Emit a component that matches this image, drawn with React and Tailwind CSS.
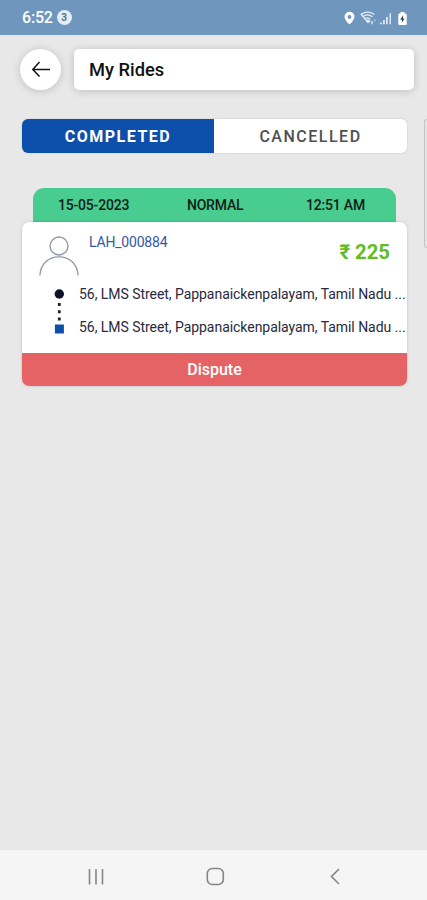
const rides = [
  {
    id: "LAH_000884",
    date: "15-05-2023",
    type: "NORMAL",
    time: "12:51 AM",
    fare: "₹ 225",
    pickup: "56, LMS Street, Pappanaickenpalayam, Tamil Nadu ...",
    drop: "56, LMS Street, Pappanaickenpalayam, Tamil Nadu ...",
  },
];

function StatusBar() {
  return (
    <div className="flex h-[35px] shrink-0 items-center justify-between bg-[#6f96bc] pl-[22px] pr-[20px] text-white">
      <div className="flex items-center gap-[4px]">
        <span className="text-[16px] font-medium leading-5 tracking-[-0.2px]">6:52</span>
        <span className="flex h-[15px] w-[15px] items-center justify-center rounded-full bg-[#e4edf5] text-[10px] font-bold text-[#56708a]">
          3
        </span>
      </div>
      <svg width="64" height="16" viewBox="0 0 64 16" fill="none">
        {/* Location */}
        <path
          fill="#fff"
          fillRule="evenodd"
          d="M6.5 1.8a5 5 0 0 0-5 5c0 3.3 5 7.8 5 7.8s5-4.500 5-7.800a5 5 0 0 0-5-5Zm0 3.300a1.900 1.900 0 1 1 0 3.800 1.900 1.900 0 0 1 0-3.800Z"
        />
        {/* Wifi */}
        <g stroke="#e6eef6" strokeWidth="1.3" strokeLinecap="round">
          <path d="M18.200 4.200c4-2.600 8.800-2.600 12.800 0" />
          <path d="M20 6.600c2.800-2.200 6.200-2.200 9 0" />
          <path d="M22 8.900c1.600-1.300 3.300-1.300 4.800 0" />
          <path d="M18.200 4.200l6.600 8.200" />
          <path d="M29 11.500v2.300" />
          <path d="M31.800 9.500v1.500" strokeWidth="1" opacity=".7" />
        </g>
        <path fill="#e6eef6" d="M24.800 9.200l3 1.800-2.600 2.300-2-2.200Z" />
        {/* Signal */}
        <path fill="#dce8f2" d="M37 12.400h1.800v1.800H37zM40 10h1.800v4.200H40zM43 7h1.800v7.200H43zM46.500 3.200h1.500v11h-1.500z" />
        {/* Battery */}
        <path fill="#fff" d="M57.500 2h4v1.500h1.300q.9 0 .9.900v9.500q0 1-1 1h-6.400q-1 0-1-1V4.400q0-.9.900-.9h1.300z" />
        <path fill="#34495c" d="M60 5.300l-2.800 4.400h1.700v3.100l2.700-4.400h-1.600z" />
      </svg>
    </div>
  );
}

function Header() {
  return (
    <div className="flex gap-[13px] pl-[20px] pr-[13px] pt-[14px]">
      <button className="flex h-[41px] w-[41px] shrink-0 items-center justify-center rounded-full bg-white pb-px shadow-[0_1px_8px_rgba(0,0,0,0.18)]">
        <svg width="20" height="18" viewBox="0 0 20 18" fill="none" stroke="#151515" strokeWidth="1.5">
          <path d="M19 9.500H2M8.500 2L1.800 9.500l6.700 7" />
        </svg>
      </button>
      <div className="flex h-[41px] flex-1 items-center rounded-[5px] bg-white px-[15px] shadow-[0_1px_8px_rgba(0,0,0,0.18)]">
        <h1 className="text-[18.300px] font-medium leading-6 text-[#111]">My Rides</h1>
      </div>
    </div>
  );
}

function Tabs() {
  return (
    <div className="flex h-[34px] w-[385px] overflow-hidden rounded-[6px] bg-white text-[16px] shadow-[0_0_2px_rgba(0,0,0,0.15)]">
      <button className="w-[192px] bg-[#0d50ac] pt-px font-bold tracking-[1.500px] text-white">COMPLETED</button>
      <button className="flex-1 pt-px font-medium tracking-[1.500px] text-[#505050]">CANCELLED</button>
    </div>
  );
}

function UserIcon() {
  return (
    <svg width="40" height="40" viewBox="0 0 40 40" fill="none" stroke="#9499ad" strokeWidth="1.400">
      <circle cx="20" cy="10" r="9" />
      <path d="M.9 39.500C1.500 28 9 20.900 20 20.900S38.500 28 39.100 39.500" />
    </svg>
  );
}

function RideCard({ ride }) {
  return (
    <div className="w-[385px]">
      <div className="mx-[11px] flex h-[34px] items-center justify-between rounded-t-[11px] bg-[#48cc90] pl-[25px] pr-[31px] text-[14px] font-medium tracking-[-0.2px] text-[#101d18]">
        <span>{ride.date}</span>
        <span className="-ml-[5px]">{ride.type}</span>
        <span>{ride.time}</span>
      </div>
      <div className="overflow-hidden rounded-[7px] bg-white shadow-[0_0_3px_rgba(0,0,0,0.18)]">
        <div className="h-[131px]">
          <div className="flex h-[56px] pl-[17px] pr-[17px] pt-[14px]">
            <UserIcon />
            <span className="ml-[10px] mt-[-2px] text-[14px] leading-4 tracking-[-0.2px] text-[#3258a7]">{ride.id}</span>
            <span className="ml-auto mt-[4px] text-[20.300px] font-bold leading-6 text-[#5ebc24]">{ride.fare}</span>
          </div>
          <div className="flex pl-[31px] pt-[8px]">
            <svg width="12" height="48" viewBox="0 0 12 48">
              <circle cx="6.300" cy="8" r="4.700" fill="#0c1029" />
              <path d="M6.300 17v3M6.300 24.200v3M6.300 31.500v3" stroke="#222" strokeWidth="2.800" />
              <path d="M1.900 38.500h9v9h-9z" fill="#0d50ac" />
            </svg>
            <div className="ml-[14px] flex flex-col gap-[16.500px] whitespace-nowrap text-[14px] leading-4 tracking-[-0.045px] text-[#29293d]">
              <span>{ride.pickup}</span>
              <span>{ride.drop}</span>
            </div>
          </div>
        </div>
        <button className="flex h-[33px] w-full items-center justify-center bg-[#e56365] text-[16px] font-medium text-white">
          Dispute
        </button>
      </div>
    </div>
  );
}

function NavBar() {
  return (
    <div className="flex h-[50px] shrink-0 items-center justify-center bg-[#f5f5f5] pt-[3px]">
      <svg width="254" height="20" viewBox="0 0 254 20" fill="none" stroke="#868686" strokeWidth="1.600">
        <path d="M2.500 2v15.500M9 2v15.500M15.500 2v15.500" />
        <rect x="120.300" y="1.500" width="16" height="16" rx="5" />
        <path d="M252 2L244.500 9.500l7.500 7.500" />
      </svg>
    </div>
  );
}

export default function App() {
  return (
    <div className="flex h-[900px] w-[427px] flex-col overflow-hidden bg-[#e8e8e8] font-['Roboto',sans-serif]">
      <StatusBar />
      <Header />
      <div className="flex flex-1 justify-between pl-[22px] pt-[29px]">
        <div className="flex flex-col gap-[35px]">
          <Tabs />
          {rides.map((ride) => (
            <RideCard key={ride.id} ride={ride} />
          ))}
        </div>
        {/* Edge of the next panel */}
        <div className="h-[129px] w-[3px] rounded-l-[3px] border border-r-0 border-[#c4c4c4] bg-[#e4e4e4]" />
      </div>
      <NavBar />
    </div>
  );
}
